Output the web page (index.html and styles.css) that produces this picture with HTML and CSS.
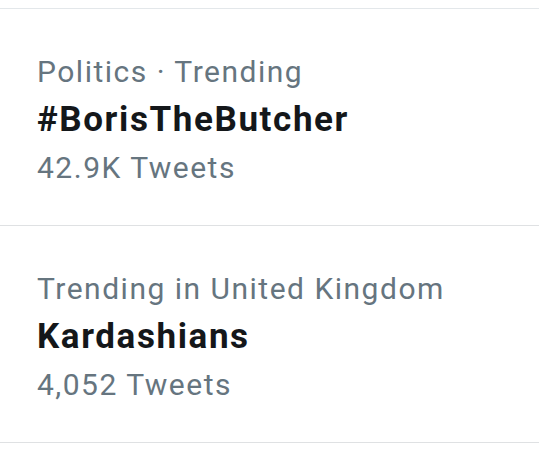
FILE: index.html
```html
<!DOCTYPE html>
<html>
<head>
<meta charset="utf-8">
<link rel="stylesheet" href="styles.css">
</head>
<body>
<div class="list">
  <div class="trend">
    <div class="meta">Politics · Trending</div>
    <div class="name">#BorisTheButcher</div>
    <div class="meta">42.9K Tweets</div>
  </div>
  <div class="trend">
    <div class="meta">Trending in United Kingdom</div>
    <div class="name">Kardashians</div>
    <div class="meta">4,052 Tweets</div>
  </div>
</div>
</body>
</html>
```
FILE: styles.css
```css
html, body {
  margin: 0;
  padding: 0;
  background: #ffffff;
}
body {
  font-family: Roboto, "Liberation Sans", sans-serif;
  padding-top: 8px;
}
.list {
  border-top: 1px solid #e3e7ea;
}
.trend {
  padding: 39px 10px 33px 37px;
  border-bottom: 1px solid #dfe1e3;
}
.meta {
  font-size: 30px;
  line-height: 48px;
  letter-spacing: 1.5px;
  color: #66757f;
}
.name {
  font-size: 35px;
  line-height: 48px;
  font-weight: 700;
  letter-spacing: 1.6px;
  color: #14171a;
}
```
